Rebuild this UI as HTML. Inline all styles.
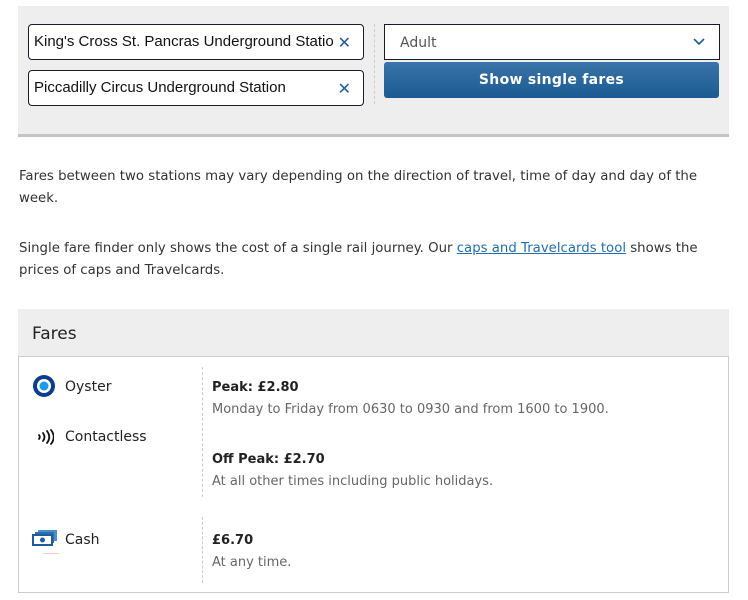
<!DOCTYPE html>
<html><head><style>
body{margin:0;background:#fff;width:748px;height:600px;overflow:hidden;font-family:"DejaVu Sans","Liberation Sans",sans-serif;color:#333;}
.panel{position:absolute;left:18px;top:6px;width:711px;height:128px;background:#eeeeee;border-bottom:3px solid #c4c4c4;}
.inp{position:absolute;left:10px;width:329px;height:34px;background:#fff;border:1px solid #1a1a2e;border-radius:4px;font-family:"Liberation Sans",sans-serif;font-size:15px;color:#111;line-height:34px;padding-left:5px;box-sizing:content-box;overflow:hidden;white-space:nowrap;}
.x{position:absolute;right:12px;top:1px;color:#1f5c94;font-size:16px;font-family:"DejaVu Sans",sans-serif;}
.vd{position:absolute;left:356px;top:18px;height:80px;border-left:1px dashed #ccc;}
.sel{position:absolute;left:366px;top:18px;height:34px;background:#fff;border:1px solid #1a1a2e;font-size:14px;color:#555;line-height:36px;padding-left:15px;box-sizing:content-box;width:319px;}
.btn{position:absolute;left:366px;top:56px;width:335px;height:36px;border-radius:3px;background:linear-gradient(#3a74a8,#1b5a92);color:#fff;font-size:14px;font-weight:bold;text-align:center;line-height:37px;letter-spacing:.3px;}
p{position:absolute;left:19px;margin:0;font-size:13.3px;line-height:22px;width:700px;}
a{color:#1f6fb5;}
.fh{position:absolute;left:18px;top:309px;width:711px;height:47px;background:#eeeeee;}
.fh span{position:absolute;left:14px;top:15px;font-size:17px;color:#222;}
.tb{position:absolute;left:18px;top:356px;width:709px;height:235px;border:1px solid #ccc;}
.vd2{position:absolute;left:183px;border-left:1px dashed #ccc;}
.lab{position:absolute;left:46px;font-size:14px;color:#222;}
.b{position:absolute;left:193px;font-size:13px;font-weight:bold;color:#222;}
.s{position:absolute;left:193px;font-size:13px;color:#666;}
</style></head><body>
<div class="panel">
<div class="inp" style="top:18px">King's Cross St. Pancras Underground Station<span class="x" style="background:#fff;padding-left:4px">✕</span></div>
<div class="inp" style="top:64px">Piccadilly Circus Underground Station<span class="x">✕</span></div>
<div class="vd"></div>
<div class="sel">Adult<svg style="position:absolute;right:14px;top:13px" width="12" height="8" viewBox="0 0 12 8"><path d="M1 1l5 5 5-5" fill="none" stroke="#1f5c94" stroke-width="1.6"/></svg></div>
<div class="btn">Show single fares</div>
</div>
<p style="top:166px">Fares between two stations may vary depending on the direction of travel, time of day and day of the week.</p>
<p style="top:238px">Single fare finder only shows the cost of a single rail journey. Our <a href="#">caps and Travelcards tool</a> shows the prices of caps and Travelcards.</p>
<div class="fh"><span>Fares</span></div>
<div class="tb">
<div class="vd2" style="top:10px;height:130px"></div>
<div class="vd2" style="top:160px;height:66px"></div>
<svg style="position:absolute;left:14px;top:18px" width="22" height="22"><circle cx="11" cy="11" r="11" fill="#0b3d91"/><circle cx="11" cy="11" r="7" fill="#fff"/><circle cx="11" cy="11" r="4.5" fill="#1e9be8"/></svg>
<div class="lab" style="top:22px">Oyster</div>
<svg style="position:absolute;left:17px;top:72px" width="18" height="16" viewBox="0 0 18 16"><g fill="none" stroke="#111" stroke-width="1.8" stroke-linecap="round"><path d="M3 6q1.5 2 0 4"/><path d="M7 4q3 4 0 8"/><path d="M11 2q4.5 6 0 12"/><path d="M15 1q5.5 7 0 14"/></g></svg>
<div class="lab" style="top:72px">Contactless</div>
<svg style="position:absolute;left:13px;top:172px" width="26" height="18" viewBox="0 0 26 18"><rect x="6" y="1" width="19" height="11" fill="#4a8fd0"/><rect x="3" y="3" width="19" height="11" fill="#2f6fae"/><rect x="0" y="5" width="21" height="12" fill="#1d5d9b"/><rect x="2" y="7" width="17" height="8" fill="#fff"/><circle cx="10.5" cy="11" r="2.5" fill="#1d5d9b"/></svg>
<div style="position:absolute;left:24px;top:196px;width:16px;height:1px;background:#f4cccc"></div>
<div class="lab" style="top:175px">Cash</div>
<div class="b" style="top:23px">Peak: £2.80</div>
<div class="s" style="top:45px">Monday to Friday from 0630 to 0930 and from 1600 to 1900.</div>
<div class="b" style="top:95px">Off Peak: £2.70</div>
<div class="s" style="top:117px">At all other times including public holidays.</div>
<div class="b" style="top:176px">£6.70</div>
<div class="s" style="top:198px">At any time.</div>
</div>
</body></html>
